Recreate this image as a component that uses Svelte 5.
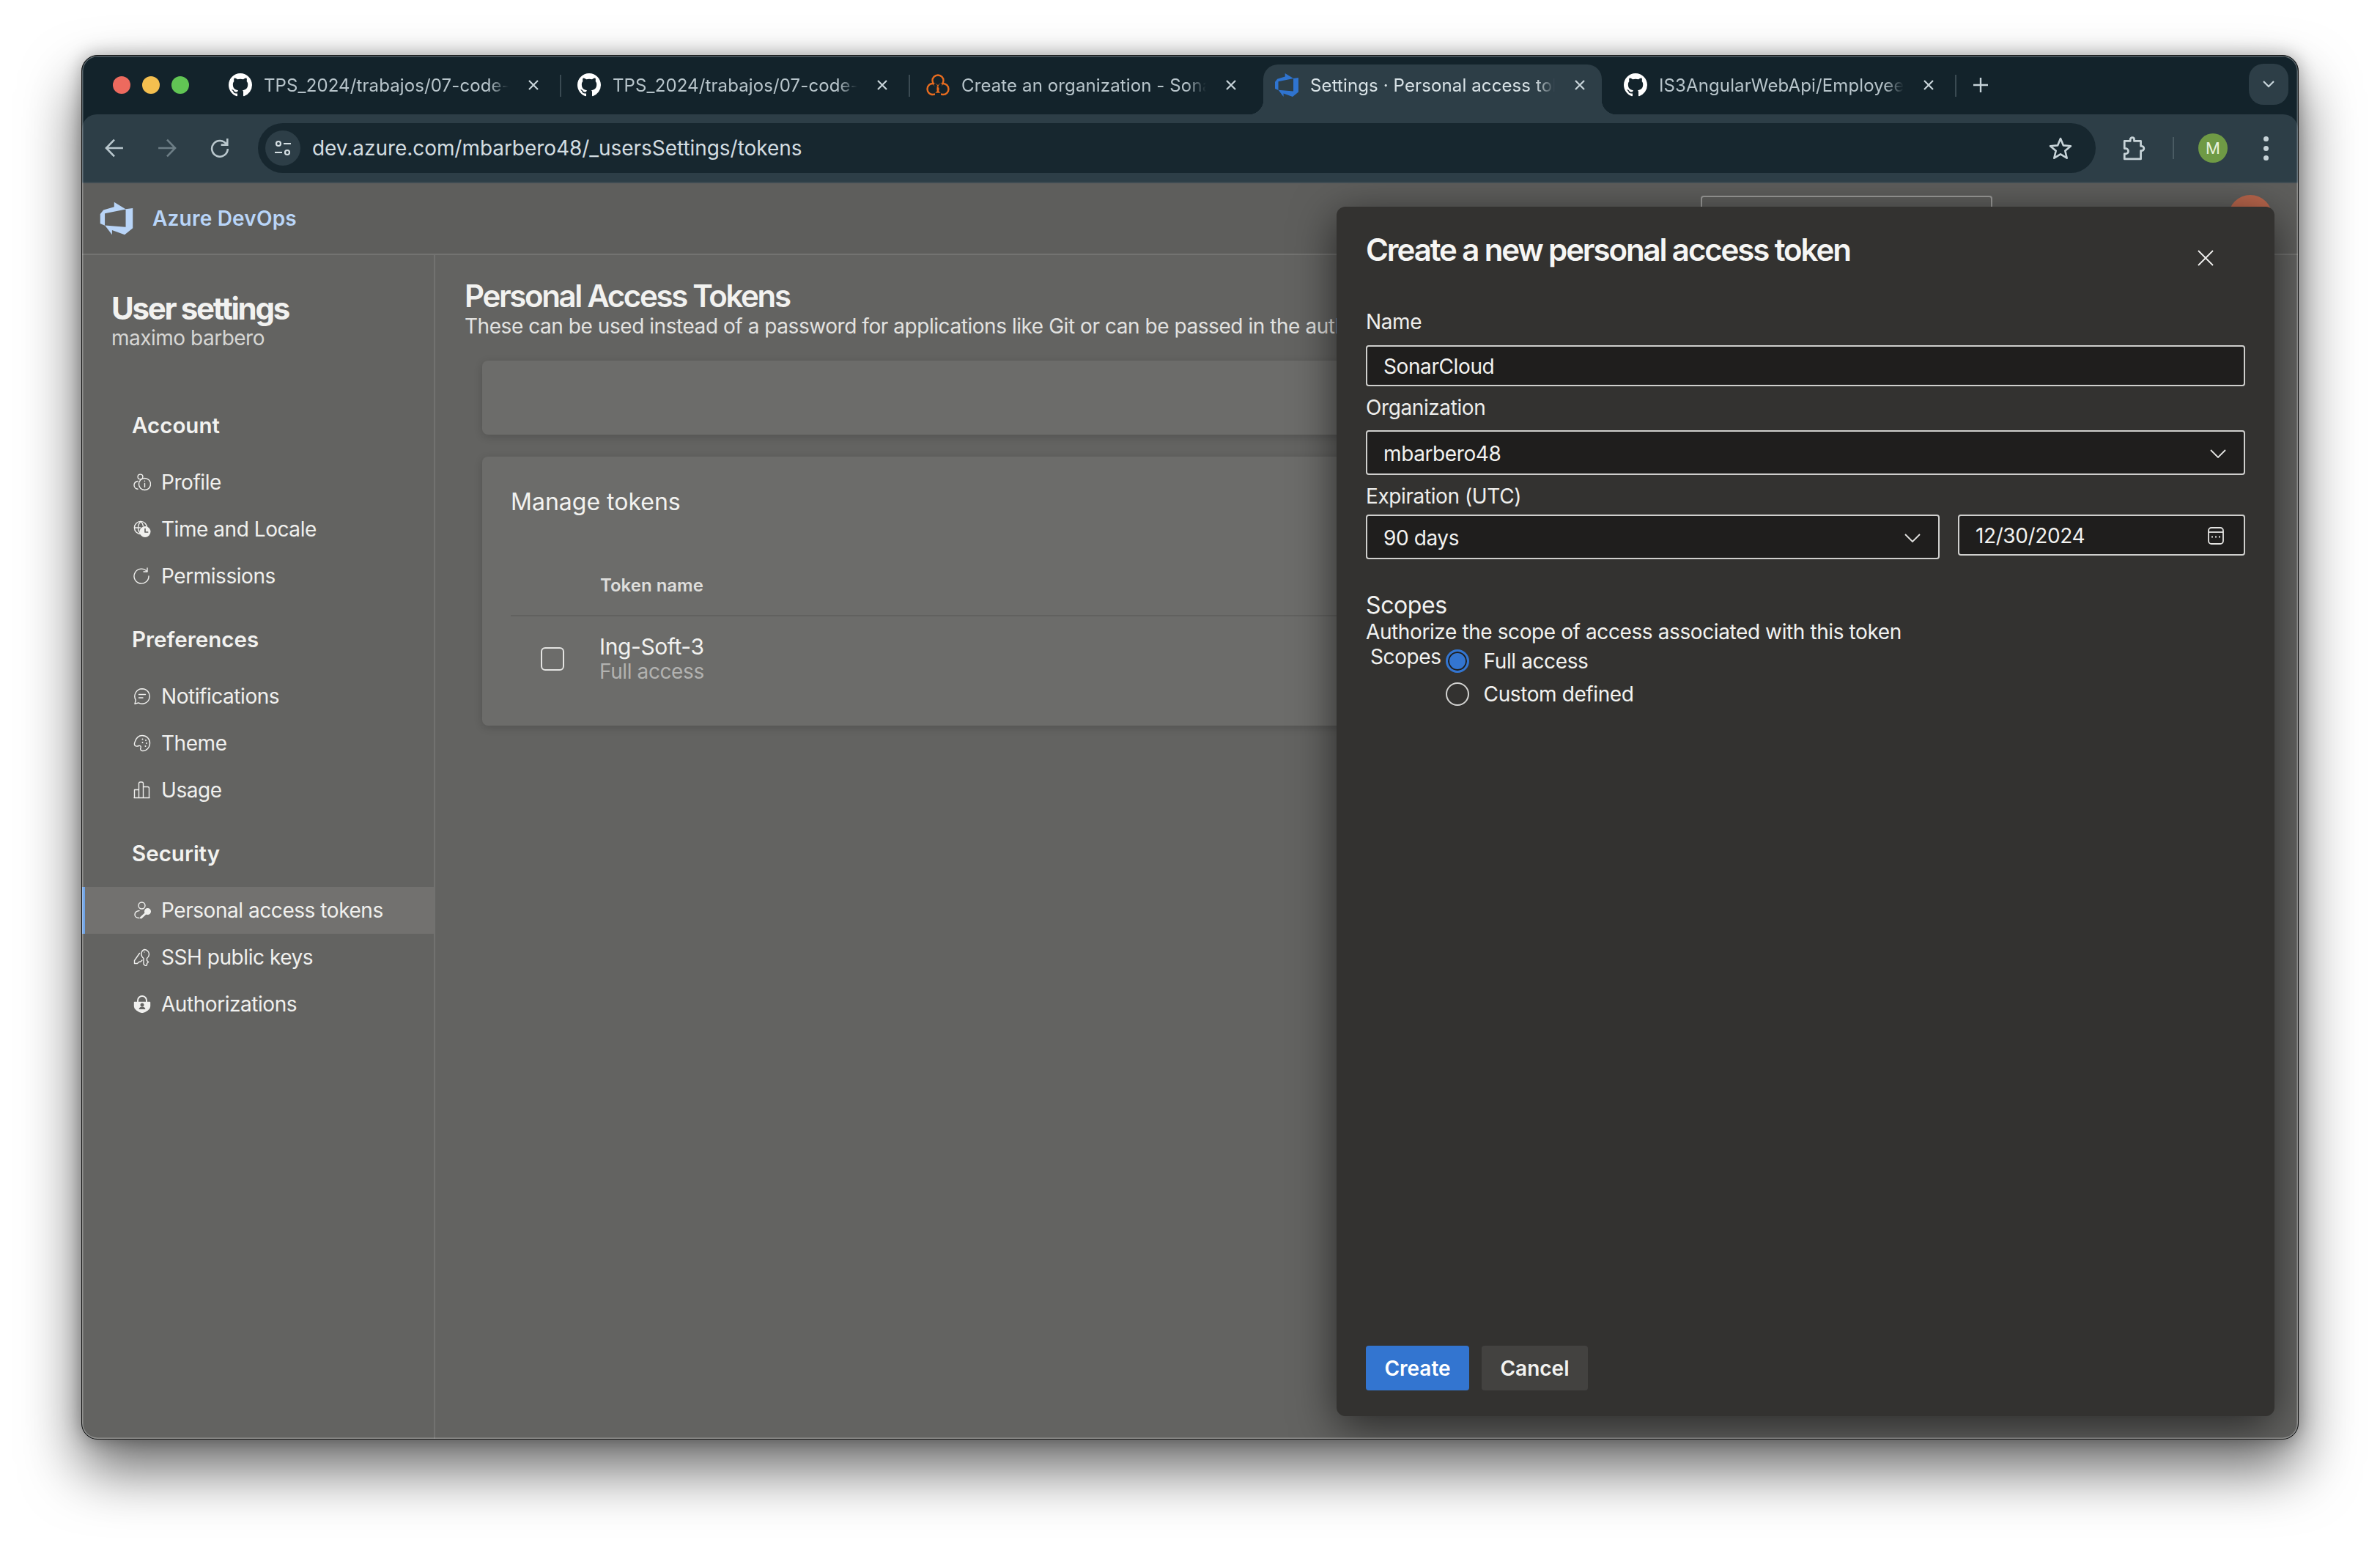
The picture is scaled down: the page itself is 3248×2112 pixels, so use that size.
<script>
  const tabs = [
    { icon: 'github', title: 'TPS_2024/trabajos/07-code-coverage', sep: true },
    { icon: 'github', title: 'TPS_2024/trabajos/07-code-coverage', sep: true },
    { icon: 'sonar', title: 'Create an organization - SonarCloud', sep: false },
    { icon: 'azure', title: 'Settings · Personal access tokens', active: true, sep: false },
    { icon: 'github', title: 'IS3AngularWebApi/EmployeeController', sep: true },
  ];

  const nav = [
    { title: 'Account', items: [
      { icon: 'profile', label: 'Profile' },
      { icon: 'time', label: 'Time and Locale' },
      { icon: 'perm', label: 'Permissions' },
    ] },
    { title: 'Preferences', items: [
      { icon: 'notif', label: 'Notifications' },
      { icon: 'theme', label: 'Theme' },
      { icon: 'usage', label: 'Usage' },
    ] },
    { title: 'Security', items: [
      { icon: 'pat', label: 'Personal access tokens', active: true },
      { icon: 'ssh', label: 'SSH public keys' },
      { icon: 'auth', label: 'Authorizations' },
    ] },
  ];

  const azurePath = 'M17 4v9.74l-4 3.28-6.2-2.26V17l-3.51-4.59 10.23.8V4.44zm-3.41.49L7.85 1v2.29L2.58 4.84 1 6.87v4.61l2.26 1V6.57z';
</script>

{#snippet tabIcon(name)}
  {#if name === 'github'}
    <svg class="favicon" viewBox="0 0 16 16"><path fill="#fff" d="M8 0C3.58 0 0 3.58 0 8c0 3.54 2.29 6.53 5.47 7.59.4.07.55-.17.55-.38 0-.19-.01-.82-.01-1.49-2.01.37-2.53-.49-2.69-.94-.09-.23-.48-.94-.82-1.13-.28-.15-.68-.52-.01-.53.63-.01 1.08.58 1.23.82.72 1.21 1.87.87 2.33.66.07-.52.28-.87.51-1.07-1.78-.2-3.64-.89-3.64-3.95 0-.87.31-1.59.82-2.15-.08-.2-.36-1.02.08-2.12 0 0 .67-.21 2.2.82.64-.18 1.32-.27 2-.27.68 0 1.36.09 2 .27 1.53-1.04 2.2-.82 2.2-.82.44 1.1.16 1.92.08 2.12.51.56.82 1.27.82 2.15 0 3.07-1.87 3.75-3.65 3.95.29.25.54.73.54 1.48 0 1.07-.01 1.93-.01 2.2 0 .21.15.46.55.38A8.013 8.013 0 0016 8c0-4.42-3.58-8-8-8z"/></svg>
  {:else if name === 'sonar'}
    <svg class="favicon" viewBox="0 0 32 32" fill="none" stroke="#e86c1f" stroke-width="2.4"><circle cx="16" cy="10" r="7.5"/><circle cx="9" cy="21.5" r="7.5"/><circle cx="23" cy="21.5" r="7.5"/><path stroke="#13232b" stroke-width="3.4" d="M11 14.5a7.5 7.5 0 0 1 3 4M21 14.5a7 7 0 0 0-3 5M12 28.5l8 0"/></svg>
  {:else}
    <svg class="favicon azure" viewBox="0 0 18 18"><path fill="#2f74d0" d={azurePath}/></svg>
  {/if}
{/snippet}

{#snippet navIcon(name)}
  <svg class="nav-icon" viewBox="0 0 24 24" fill="none" stroke="currentColor" stroke-width="1.4" stroke-linecap="round" stroke-linejoin="round">
    {#if name === 'profile'}
      <circle cx="9.5" cy="4.5" r="3.4"/>
      <path d="M6 10.5c-3 .6-5 2.7-5 5.5 0 3 2.6 5 5 5.3"/>
      <circle cx="15.5" cy="14.5" r="8"/>
      <path d="M15.5 13.5v5M15.5 10.2v.4"/>
    {:else if name === 'time'}
      <circle cx="10" cy="10" r="8.6"/>
      <path d="M1.5 10h8M10 1.5c-2.5 2.5-3.5 5.5-3.5 8.500s1 6 3.500 8.500M10 1.500c2 1.800 3 3.800 3.400 6"/>
      <circle cx="16" cy="15.500" r="7.500" fill="currentColor" stroke="none"/>
      <path stroke="#636361" stroke-width="1.700" d="M16 11.500v4.500h3.600"/>
    {:else if name === 'perm'}
      <path d="M18.500 5.500A10 10 0 1 0 21 12"/>
      <path d="M19 1v5h-5"/>
    {:else if name === 'notif'}
      <path d="M12 1.800a10.200 10.200 0 1 1-5 19.100l-5 1.300 1.300-5A10.200 10.200 0 0 1 12 1.800z"/>
      <path d="M7.500 9.500h9M7.500 14h5.500"/>
    {:else if name === 'theme'}
      <path d="M12 1.500c6 0 10.500 4.500 10.500 10.300 0 6-4.500 10.700-9.500 10.700-3 0-3.800-2.200-3-4 .8-2-.3-3.500-2.300-3-2 .6-3.500 1-5 .2-1.500-1-1.500-3-.8-5C3.500 5.500 7 1.500 12 1.500z"/>
      <path stroke-width="2" d="M17 8v.1M18 12v.1M16.500 16v.1M12.500 6.500v.1M12.500 11v.1"/>
    {:else if name === 'usage'}
      <path d="M1.500 22.500v-11h6v11M7.500 22.500V2.500a2 2 0 0 1 2-1.500h2a2 2 0 0 1 2 1.500v20M13.500 22.500v-15h6a2 2 0 0 1 2 2v13zM1 22.500h21"/>
    {:else if name === 'pat'}
      <circle cx="11.500" cy="5.500" r="4.500"/>
      <path d="M8 12.500c-3.500.5-6 2.500-6 5.500 0 2.500 2.500 4.500 6 4.500"/>
      <circle cx="19.500" cy="13.500" r="3.800" fill="currentColor"/>
      <path stroke-width="3" d="M17 16l-6.500 6"/>
    {:else if name === 'ssh'}
      <path d="M15 1.500a6.500 6.500 0 0 1 6.500 6.500c0 2.500-1.200 4-3 5.500v3l2 2-2 2v2l-1.500 1.500-3-2.500V13.500c-2-1.500-3-3.500-3-5.500A6.500 6.500 0 0 1 15 1.500z"/>
      <path d="M8.500 6.500L1.500 16.500v4h4l2-2 2.500-.5 2-2M15 5v.1"/>
    {:else if name === 'auth'}
      <path d="M6 8.500V7a6 6 0 0 1 12 0v1.500" stroke-width="2"/>
      <path fill="currentColor" d="M1.500 9.500h21V15c0 3.500-4.500 7-10.500 8.500C6 22 1.500 18.500 1.500 15z"/>
      <circle cx="12" cy="13" r="2.500" fill="#636361" stroke="none"/>
      <path fill="#636361" stroke="none" d="M7.500 19c.5-2.500 2.300-3.500 4.500-3.500s4 1 4.500 3.500z"/>
    {/if}
  </svg>
{/snippet}

{#snippet chevron()}
  <svg class="chevron" viewBox="0 0 22 12" fill="none" stroke="#e4e4e2" stroke-width="1.800"><path d="M1 1l10 10L21 1"/></svg>
{/snippet}

<div class="screen">
  <div class="window">
    <div class="strip">
      <div class="lights">
        <span class="light red"></span>
        <span class="light yellow"></span>
        <span class="light green"></span>
      </div>
      {#each tabs as tab}
        <div class="tab" class:active={tab.active} class:sep={tab.sep}>
          {@render tabIcon(tab.icon)}
          <span class="tab-title">{tab.title}</span>
          <svg class="tab-close" viewBox="0 0 16 16" fill="none" stroke="currentColor" stroke-width="2.200"><path d="M2 2l12 12M14 2L2 14"/></svg>
        </div>
      {/each}
      <svg class="new-tab" viewBox="0 0 20 20" fill="none" stroke="#c5d2d8" stroke-width="2.400"><path d="M10 0v20M0 10h20"/></svg>
      <div class="tab-search">
        <svg viewBox="0 0 16 10" fill="none" stroke="#c9d6dc" stroke-width="2.200"><path d="M1 1l7 7 7-7"/></svg>
      </div>
    </div>

    <div class="toolbar">
      <button class="tool">
        <svg viewBox="0 0 24 24" fill="none" stroke="#b9c7cd" stroke-width="2.400"><path d="M23 12H2M12 1.500L1.800 12 12 22.500"/></svg>
      </button>
      <button class="tool">
        <svg viewBox="0 0 24 24" fill="none" stroke="#6d7e86" stroke-width="2.400"><path d="M1 12h21M12 1.500L22.200 12 12 22.500"/></svg>
      </button>
      <button class="tool">
        <svg viewBox="0 0 24 24" fill="none" stroke="#b9c7cd" stroke-width="2.400"><path d="M20.500 7.500A10 10 0 1 0 22 13"/><path d="M21.500 0v8h-8"/></svg>
      </button>
      <div class="address">
        <span class="site-chip">
          <svg viewBox="0 0 24 24" fill="none" stroke="#d5dfe3" stroke-width="2.200"><circle cx="6" cy="6" r="3"/><path d="M13 6h10M1 18h10"/><circle cx="18" cy="18" r="3"/></svg>
        </span>
        <span class="url">dev.azure.com/mbarbero48/_usersSettings/tokens</span>
        <svg class="star" viewBox="0 0 32 32" fill="none" stroke="#c7d3d8" stroke-width="2.600" stroke-linejoin="round"><path d="M16 3l3.900 9.400 10.100.8-7.700 6.600 2.400 9.900L16 24.400l-8.700 5.300 2.400-9.900L2 13.200l10.100-.8z"/></svg>
      </div>
      <svg class="puzzle" viewBox="0 0 32 32" fill="none" stroke="#c7d3d8" stroke-width="2.600" stroke-linejoin="round"><path d="M4 7h7.500V5a2.500 2.500 0 0 1 5 0v2H25v6.500h1a2.500 2.500 0 0 1 0 6h-1V30H4v-6.500h1.500a3.500 3.500 0 0 0 0-7H4z"/></svg>
      <span class="tool-sep"></span>
      <span class="me">M</span>
      <span class="menu-dots"><i></i><i></i><i></i></span>
    </div>

    <div class="page">
      <header class="topbar">
        <svg class="logo" viewBox="0 0 18 18"><path fill="#b9d5f8" d={azurePath}/></svg>
        <span class="brand">Azure DevOps</span>
        <span class="search"></span>
        <span class="user"></span>
      </header>
      <div class="body">
        <aside class="sidebar">
          <h2>User settings</h2>
          <div class="who">maximo barbero</div>
          {#each nav as section}
            <section class="nav-section">
              <h3>{section.title}</h3>
              {#each section.items as item}
                <div class="nav-item" class:active={item.active}>
                  {@render navIcon(item.icon)}
                  <span>{item.label}</span>
                </div>
              {/each}
            </section>
          {/each}
        </aside>
        <main class="main">
          <h1>Personal Access Tokens</h1>
          <p class="lead">These can be used instead of a password for applications like Git or can be passed in the authorization header to access REST APIs</p>
          <div class="card blank"></div>
          <div class="card tokens">
            <h4>Manage tokens</h4>
            <div class="thead">Token name</div>
            <div class="trow">
              <span class="check"></span>
              <div>
                <div class="token-name">Ing-Soft-3</div>
                <div class="token-scope">Full access</div>
              </div>
            </div>
          </div>
        </main>
      </div>

      <div class="panel">
        <svg class="panel-close" viewBox="0 0 22 22" fill="none" stroke="#f0f0ee" stroke-width="1.800"><path d="M1 1l20 20M21 1L1 21"/></svg>
        <h2 class="panel-title">Create a new personal access token</h2>
        <div class="label first">Name</div>
        <input class="field name" value="SonarCloud" readonly />
        <div class="label">Organization</div>
        <div class="field select"><span>mbarbero48</span>{@render chevron()}</div>
        <div class="label">Expiration (UTC)</div>
        <div class="expiry">
          <div class="field select days"><span>90 days</span>{@render chevron()}</div>
          <div class="field date">
            <span>12/30/2024</span>
            <svg class="calendar" viewBox="0 0 24 24" fill="none" stroke="#e4e4e2" stroke-width="1.800"><rect x="2" y="1" width="20" height="22" rx="4"/><path d="M2 7h20"/><path stroke-width="2" d="M7 12.500v2M12 12.500v2M17 12.500v2M7 17.500v.1"/></svg>
          </div>
        </div>
        <div class="scopes-title">Scopes</div>
        <div class="scopes-desc">Authorize the scope of access associated with this token</div>
        <div class="scopes">
          <span class="scopes-label">Scopes</span>
          <div class="radios">
            <div class="radio-row"><span class="radio on"></span>Full access</div>
            <div class="radio-row"><span class="radio"></span>Custom defined</div>
          </div>
        </div>
        <div class="actions">
          <button class="btn primary">Create</button>
          <button class="btn">Cancel</button>
        </div>
      </div>
    </div>
  </div>
</div>

<style>
  :global(body) {
    margin: 0;
    background: #fff;
  }

  .screen {
    box-sizing: border-box;
    width: 3248px;
    height: 2112px;
    padding: 75px 111px 148px;
    font-family: Inter, "Liberation Sans", sans-serif;
    overflow: hidden;
  }

  .window {
    position: relative;
    box-sizing: border-box;
    height: 100%;
    display: flex;
    flex-direction: column;
    background: #13232b;
    border: 1px solid #111;
    border-radius: 22px;
    box-shadow: 0 40px 80px rgba(0, 0, 0, 0.6), 0 0 24px rgba(0, 0, 0, 0.3);
    overflow: hidden;
  }

  .window::after {
    content: '';
    position: absolute;
    inset: 0;
    border-radius: 21px;
    box-shadow: inset 0 0 0 1.5px rgba(255, 255, 255, 0.3);
    pointer-events: none;
    z-index: 5;
  }

  .strip {
    display: flex;
    align-items: flex-end;
    height: 80px;
    flex: none;
    position: relative;
  }

  .lights {
    display: flex;
    align-items: center;
    gap: 16px;
    width: 177px;
    padding-left: 42px;
    box-sizing: border-box;
    align-self: flex-start;
    padding-top: 28px;
  }

  .light {
    width: 24px;
    height: 24px;
    border-radius: 50%;
  }
  .red { background: #ed6a5e; }
  .yellow { background: #f4bf4f; }
  .green { background: #61c554; }

  .tab {
    position: relative;
    box-sizing: border-box;
    width: 476px;
    height: 68px;
    padding: 0 23px 12px;
    display: flex;
    align-items: center;
    gap: 16px;
    color: #b8c5cb;
    font-size: 24px;
    letter-spacing: 0.12px;
  }

  .tab.sep::after {
    content: '';
    position: absolute;
    right: -1px;
    top: 14px;
    width: 2px;
    height: 30px;
    background: #3a4a52;
  }

  .tab.active {
    color: #d8e2e6;
    background: #2d3e47;
    margin: 0 7px;
    width: 462px;
    padding-left: 16px;
    border-radius: 20px 20px 0 0;
  }

  .tab.active::before,
  .tab.active::after {
    content: '';
    position: absolute;
    bottom: 0;
    width: 20px;
    height: 20px;
    background: radial-gradient(circle at 0 0, transparent 20px, #2d3e47 20.5px);
  }
  .tab.active::before { left: -20px; }
  .tab.active::after {
    right: -20px;
    background: radial-gradient(circle at 100% 0, transparent 20px, #2d3e47 20.5px);
  }

  .favicon {
    width: 32px;
    height: 32px;
    flex: none;
  }

  .favicon.azure {
    width: 36px;
    height: 36px;
    margin: 0 -2px;
  }

  .tab-title {
    width: 334px;
    flex: none;
    overflow: hidden;
    white-space: nowrap;
    -webkit-mask-image: linear-gradient(to right, #000 92%, transparent 100%);
    mask-image: linear-gradient(to right, #000 92%, transparent 100%);
  }

  .tab-close {
    width: 16px;
    height: 16px;
    flex: none;
    margin-left: 10px;
    color: #c9d5da;
  }

  .new-tab {
    width: 20px;
    height: 20px;
    margin: 0 0 30px 24px;
  }

  .tab-search {
    position: absolute;
    right: 13px;
    top: 11px;
    width: 54px;
    height: 56px;
    border-radius: 20px;
    background: #2d3e47;
    display: flex;
    align-items: center;
    justify-content: center;
  }
  .tab-search svg {
    width: 16px;
    height: 10px;
  }

  .toolbar {
    position: relative;
    flex: none;
    height: 92px;
    box-sizing: border-box;
    display: flex;
    align-items: center;
    padding-left: 8px;
    background: #2d3e47;
    border-radius: 20px 20px 0 0;
  }

  .tool {
    width: 72px;
    height: 72px;
    padding: 0;
    background: none;
    border: 0;
    display: flex;
    align-items: center;
    justify-content: center;
  }
  .tool svg {
    width: 26px;
    height: 26px;
  }

  .address {
    margin-left: 16px;
    width: 2508px;
    height: 68px;
    flex: none;
    border-radius: 34px;
    background: #17272f;
    display: flex;
    align-items: center;
    padding-left: 10px;
    box-sizing: border-box;
  }

  .site-chip {
    width: 48px;
    height: 48px;
    border-radius: 50%;
    background: #2d3e47;
    display: flex;
    align-items: center;
    justify-content: center;
    flex: none;
  }
  .site-chip svg {
    width: 24px;
    height: 24px;
  }

  .url {
    margin-left: 16px;
    color: #d3dde1;
    font-size: 28px;
    letter-spacing: -0.05px;
    white-space: nowrap;
  }

  .star {
    width: 32px;
    height: 32px;
    margin-left: auto;
    margin-right: 32px;
  }

  .puzzle {
    width: 34px;
    height: 34px;
    margin-left: 35px;
    flex: none;
  }

  .tool-sep {
    width: 2px;
    height: 30px;
    background: #4a5b63;
    margin-left: 36px;
    flex: none;
  }

  .me {
    width: 40px;
    height: 40px;
    margin-left: 33px;
    border-radius: 50%;
    background: #6f9a45;
    color: #e8f2dc;
    font-size: 22px;
    display: flex;
    align-items: center;
    justify-content: center;
    flex: none;
  }

  .menu-dots {
    margin-left: 49px;
    display: flex;
    flex-direction: column;
    gap: 6px;
    flex: none;
  }
  .menu-dots i {
    display: block;
    width: 7px;
    height: 7px;
    border-radius: 50%;
    background: #c7d3d8;
  }

  .page {
    position: relative;
    flex: 1;
    min-height: 0;
    display: flex;
    flex-direction: column;
    background: #636361;
    border-top: 2px solid #3e4b52;
    overflow: hidden;
    color: #f2f2f0;
  }

  .topbar {
    flex: none;
    height: 98px;
    box-sizing: border-box;
    display: flex;
    align-items: center;
    padding-left: 22px;
    border-bottom: 2px solid #737371;
    background: #5e5e5c;
    position: relative;
  }

  .logo {
    width: 50px;
    height: 50px;
  }

  .brand {
    margin-left: 24px;
    font-size: 28px;
    font-weight: 600;
    letter-spacing: 0.2px;
    color: #b9d5f8;
  }

  .search {
    position: absolute;
    left: 2209px;
    top: 17px;
    width: 398px;
    height: 60px;
    box-sizing: border-box;
    border: 2px solid #9c9c9a;
    border-radius: 4px;
  }

  .user {
    position: absolute;
    left: 2929px;
    top: 16px;
    width: 60px;
    height: 60px;
    border-radius: 50%;
    background: #b9664c;
  }

  .body {
    flex: 1;
    display: flex;
    min-height: 0;
  }

  .sidebar {
    width: 482px;
    flex: none;
    box-sizing: border-box;
    padding-top: 48px;
    border-right: 2px solid #727270;
  }

  .sidebar h2 {
    margin: 0 0 0 40px;
    font-size: 42px;
    line-height: 50px;
    font-weight: 700;
    letter-spacing: -2.3px;
  }

  .who {
    margin: -2px 0 0 40px;
    font-size: 28px;
    line-height: 34px;
    letter-spacing: -0.5px;
    color: #d6d6d4;
  }

  .nav-section {
    margin-top: 34px;
  }
  .who + .nav-section {
    margin-top: 82px;
  }

  .nav-section h3 {
    margin: 0 0 26px 68px;
    font-size: 29.5px;
    line-height: 40px;
    font-weight: 600;
  }

  .nav-item {
    height: 64px;
    display: flex;
    align-items: center;
    gap: 14px;
    padding-left: 70px;
    font-size: 28px;
    letter-spacing: -0.45px;
    color: #f0f0ee;
  }

  .nav-item.active {
    background: #72716f;
    box-shadow: inset 4px 0 0 #6fa3e6;
  }

  .nav-icon {
    width: 24px;
    height: 24px;
    flex: none;
  }

  .main {
    flex: 1;
    min-width: 0;
    padding: 33px 45px 0 40px;
    overflow: hidden;
  }

  .main h1 {
    margin: 0;
    font-size: 42px;
    line-height: 46px;
    font-weight: 600;
    letter-spacing: -2.35px;
  }

  .lead {
    margin: 1px 0 0;
    font-size: 28px;
    line-height: 34px;
    letter-spacing: -0.45px;
    color: #e2e2e0;
    white-space: nowrap;
  }

  .card {
    margin: 30px 0 0 24px;
    background: #6c6c6a;
    border-radius: 8px;
    box-shadow: 0 3px 12px rgba(0, 0, 0, 0.16);
  }

  .blank {
    height: 101px;
  }

  .tokens {
    height: 367px;
    box-sizing: border-box;
    padding: 42px 0 0 39px;
  }

  .tokens h4 {
    margin: 0;
    font-size: 32px;
    line-height: 40px;
    font-weight: 400;
  }

  .thead {
    margin-top: 52px;
    height: 84px;
    box-sizing: border-box;
    padding: 26px 0 0 122px;
    font-size: 24px;
    line-height: 32px;
    font-weight: 600;
    color: #dededc;
    border-bottom: 2px solid #61615f;
  }

  .trow {
    display: flex;
    align-items: center;
    padding: 24px 0 0 41px;
    gap: 48px;
  }

  .check {
    width: 32px;
    height: 32px;
    box-sizing: border-box;
    border: 2px solid #e4e4e2;
    border-radius: 6px;
  }

  .token-name {
    font-size: 30px;
    line-height: 34px;
    letter-spacing: -0.4px;
  }

  .token-scope {
    font-size: 28px;
    line-height: 34px;
    letter-spacing: -0.4px;
    color: #b2b2b0;
  }

  .panel {
    position: absolute;
    left: 1712px;
    top: 32px;
    width: 1280px;
    height: 1650px;
    box-sizing: border-box;
    padding: 34px 40px 35px;
    display: flex;
    flex-direction: column;
    background: #333230;
    border-radius: 12px;
    box-shadow: 0 14px 60px rgba(0, 0, 0, 0.6);
    letter-spacing: -0.4px;
  }

  .panel-close {
    position: absolute;
    right: 83px;
    top: 59px;
    width: 22px;
    height: 22px;
  }

  .panel-title {
    margin: 0;
    font-size: 42px;
    line-height: 50px;
    font-weight: 600;
    letter-spacing: -2.1px;
    color: #f6f6f4;
  }

  .label {
    margin-top: 12px;
    font-size: 28px;
    line-height: 34px;
    color: #eeeeec;
  }
  .label.first {
    margin-top: 56px;
  }

  .field {
    box-sizing: border-box;
    width: 100%;
    margin: 14px 0 0;
    padding: 2px 22px 0;
    background: #1f1e1d;
    border: 2px solid #cfcfcd;
    border-radius: 4px;
    font: 400 28px Inter, "Liberation Sans", sans-serif;
    letter-spacing: -0.4px;
    color: #f2f2f0;
    outline: none;
    display: flex;
    align-items: center;
    justify-content: space-between;
    flex: none;
  }

  .name {
    height: 56px;
    margin-top: 15px;
  }

  .select {
    height: 61px;
  }

  .expiry {
    margin-top: 8px;
    display: flex;
    align-items: flex-start;
    gap: 25px;
  }
  .expiry .field {
    margin: 0;
  }

  .days {
    width: 783px;
  }

  .date {
    width: 392px;
    height: 56px;
  }

  .chevron {
    width: 22px;
    height: 12px;
    flex: none;
    margin-right: 2px;
  }

  .calendar {
    width: 24px;
    height: 24px;
    flex: none;
    margin-right: 4px;
  }

  .scopes-title {
    margin-top: 43px;
    font-size: 32px;
    line-height: 40px;
  }

  .scopes-desc {
    font-size: 28px;
    line-height: 34px;
    margin-top: -1px;
  }

  .scopes {
    display: flex;
    align-items: flex-start;
    gap: 6px;
    font-size: 28px;
    line-height: 34px;
  }

  .scopes-label {
    margin-left: 6px;
  }

  .radio-row {
    height: 45px;
    display: flex;
    align-items: center;
    gap: 20px;
  }

  .radio {
    width: 32px;
    height: 32px;
    box-sizing: border-box;
    border: 2px solid #d4d4d2;
    border-radius: 50%;
    flex: none;
  }

  .radio.on {
    border: 3px solid #3375d0;
    background: #3375d0;
    box-shadow: inset 0 0 0 2px #1f1e1d;
  }

  .actions {
    margin-top: auto;
    display: flex;
    gap: 17px;
  }

  .btn {
    height: 61px;
    width: 145px;
    padding: 0;
    border: 0;
    border-radius: 4px;
    background: #434240;
    color: #f2f2f0;
    font: 600 28px Inter, "Liberation Sans", sans-serif;
  }

  .btn.primary {
    width: 141px;
    background: #3375d0;
    color: #fff;
  }
</style>
